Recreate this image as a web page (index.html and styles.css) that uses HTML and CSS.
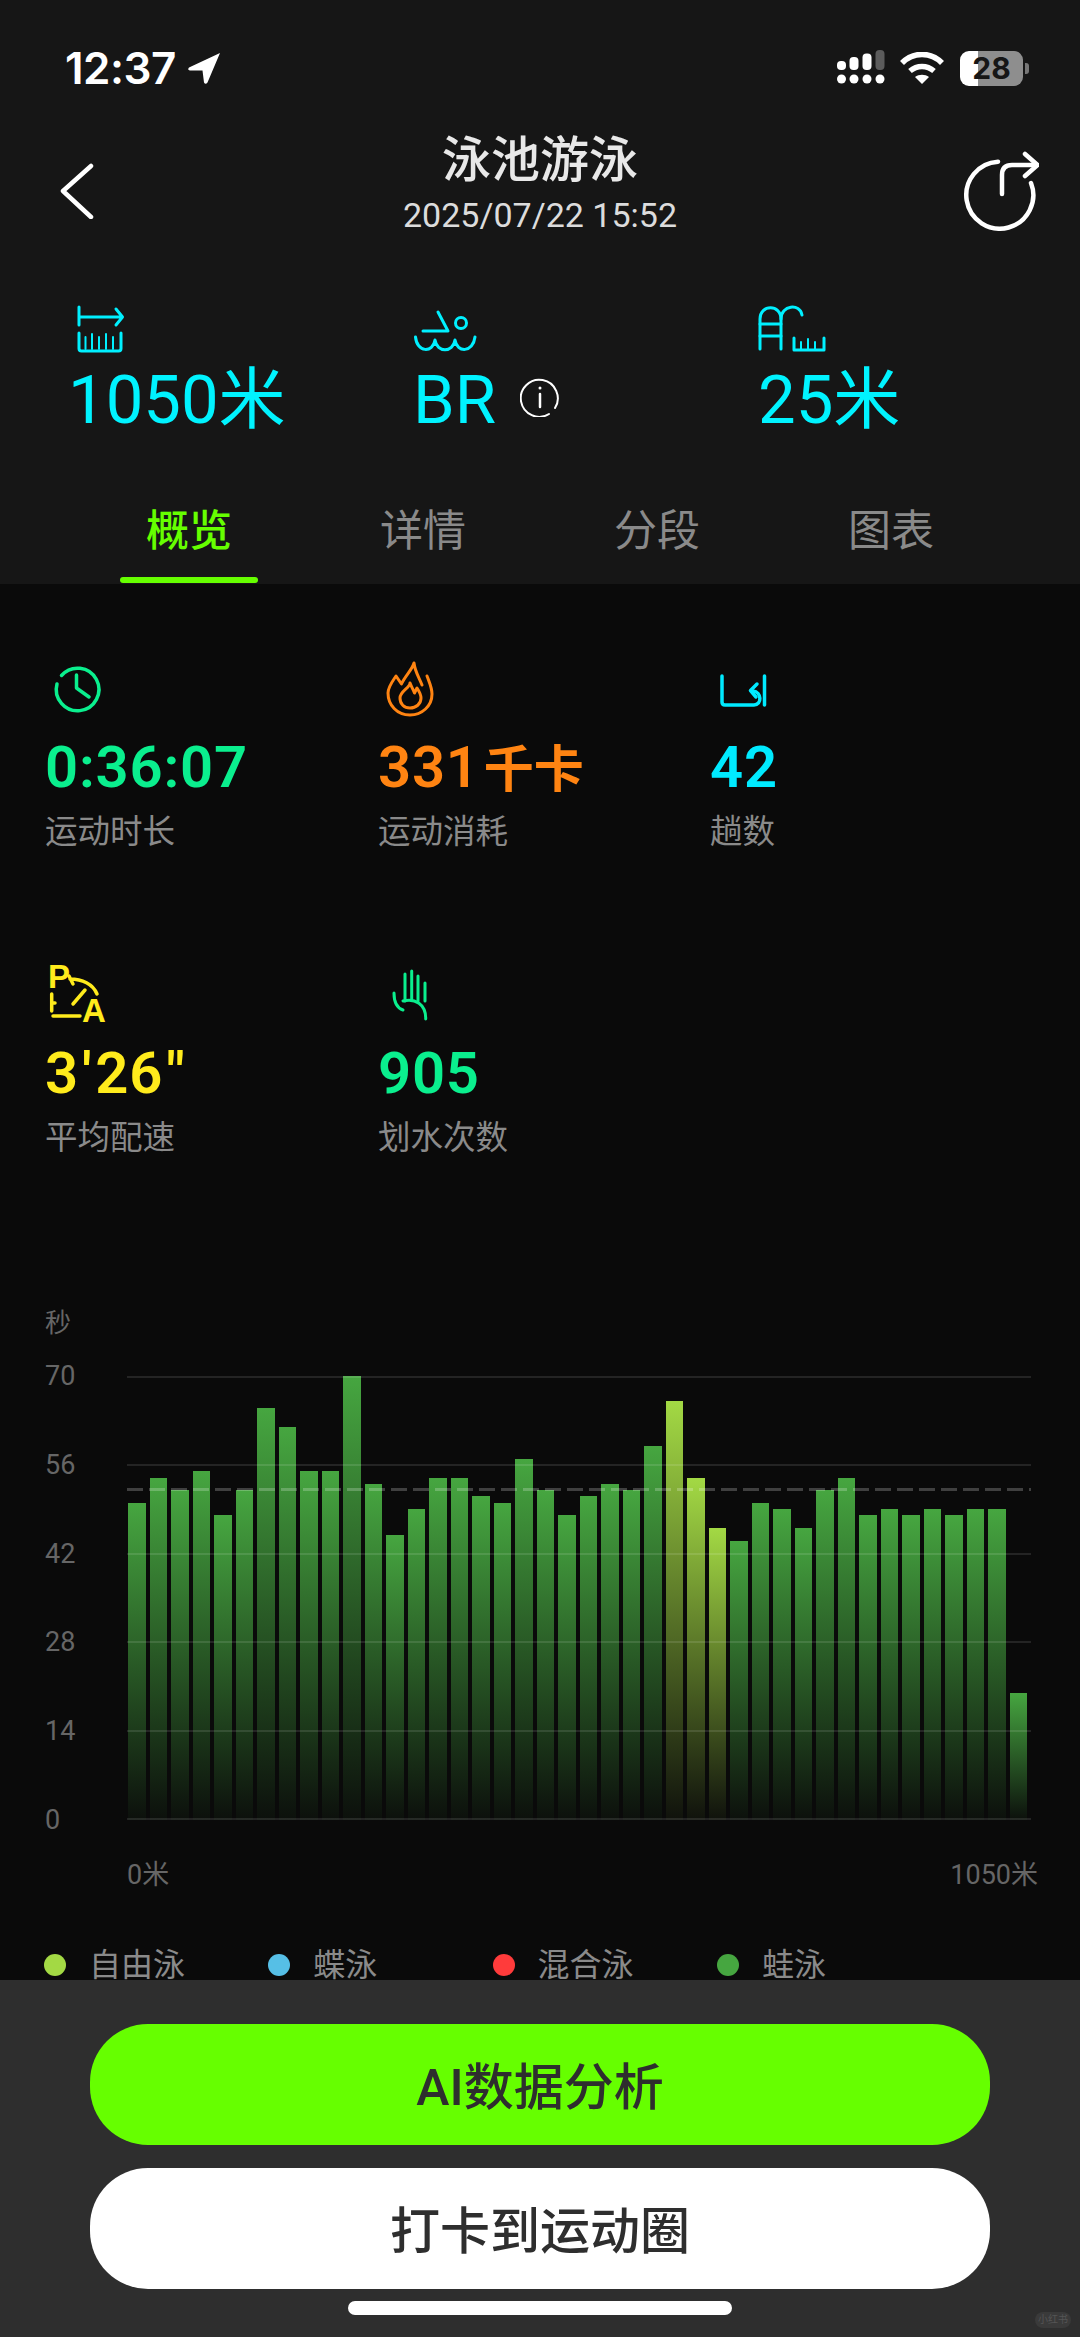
FILE: index.html
```html
<!DOCTYPE html>
<html lang="zh-CN">

<head>
<title>泳池游泳</title>
<meta charset="utf-8" />
<meta name="viewport" content="width=device-width, initial-scale=1.0">

<link rel="stylesheet" href="styles.css">
</head>

<body>

<header class="top">
  <div class="status">
    <span class="time">12:37</span>
    <svg class="location" viewBox="0 0 34 32"><path d="M33 1 2 15.500Q0 18 3 18.500L15.500 18.500 17 30.500Q18.500 33 20.500 30.500Z" fill="#fff"/></svg>
    <span class="status-right">
      <svg class="signal" viewBox="0 0 48 36" fill="#fff">
        <rect x="0" y="11" width="9" height="9" rx="4"/>
        <rect x="12.500" y="7" width="9" height="13" rx="4"/>
        <rect x="25.500" y="3.500" width="9" height="16.500" rx="4"/>
        <rect x="38.500" y="0" width="9" height="20" rx="4" fill="#5c5c5c"/>
        <circle cx="4.500" cy="29" r="4.500"/>
        <circle cx="17" cy="29" r="4.500"/>
        <circle cx="30" cy="29" r="4.500"/>
        <circle cx="43" cy="29" r="4.500"/>
      </svg>
      <svg class="wifi" viewBox="0 0 44 33" fill="none" stroke="#fff">
        <path d="M2 11C13-.5 31-.5 42 11" stroke-width="5.500"/>
        <path d="M10 19C17 13 27 13 34 19" stroke-width="5.500"/>
        <path d="M22 32 15 25C19 22 25 22 29 25Z" fill="#fff" stroke="none"/>
      </svg>
      <span class="battery">28</span>
    </span>
  </div>

  <nav class="nav">
    <svg class="back" viewBox="0 0 36 56" fill="none" stroke="#fff" stroke-width="4.500" stroke-linecap="round" stroke-linejoin="round"><path d="M31 3 3 28 31 54" /></svg>
    <div class="nav-title">
      <h1>泳池游泳</h1>
      <p>2025/07/22 15:52</p>
    </div>
    <svg class="share" viewBox="0 0 80 80" fill="none" stroke="#fff" stroke-width="4.500" stroke-linecap="round" stroke-linejoin="round">
      <path d="M39 10.700A33.500 33.500 0 1 0 72 32"/>
      <path d="M43 43V24Q43 14 53 14H78"/>
      <path d="M66 3 78.500 14 66 25"/>
    </svg>
  </nav>

  <section class="metrics">
    <div class="metric">
      <svg class="metric-icon" viewBox="0 0 60 52" fill="none" stroke="#00f0ff" stroke-width="3" stroke-linecap="round" stroke-linejoin="round">
        <path d="M7 4V22M7 14H50M44 6 50.500 14 44 22"/>
        <path d="M7 30V45.500Q7 48 9.500 48H46.500Q49 48 49 45.500V30"/>
        <path d="M13.500 34V46M20 31V46M27 34V46M34 31V46M41 34V46" stroke-width="2"/>
      </svg>
      <div class="metric-value">1050米</div>
    </div>
    <div class="metric">
      <svg class="metric-icon swim-icon" viewBox="0 0 64 52" fill="none" stroke="#00f0ff" stroke-width="3" stroke-linecap="round" stroke-linejoin="round">
        <path d="M24 9 34 28H9"/>
        <circle cx="47" cy="20" r="5.500"/>
        <path d="M1.500 34C3 50 19 50 21 37 23 50 39 50 41 37 43 50 59 50 61 34"/>
      </svg>
      <div class="metric-value">BR
        <svg class="info" viewBox="0 0 40 40" fill="none" stroke="#fff" stroke-width="2" stroke-linecap="round">
          <path d="M29 37A18.500 18.500 0 1 1 35 31"/>
          <path d="M20 17V30" stroke-width="2.500"/>
          <circle cx="20" cy="11" r="1.500" fill="#fff" stroke="none"/>
        </svg>
      </div>
    </div>
    <div class="metric">
      <svg class="metric-icon pool-icon" viewBox="0 0 68 52" fill="none" stroke="#00f0ff" stroke-width="3" stroke-linecap="round" stroke-linejoin="round">
        <path d="M2 46V16C2 1 23 1 23 16V46"/>
        <path d="M23 16C23 2 42 0 44 12"/>
        <path d="M2 21H23M2 33H23"/>
        <path d="M36 35V47H66V35"/>
        <path d="M43 39V47M50 36V47M57 39V47" stroke-width="2"/>
      </svg>
      <div class="metric-value">25米</div>
    </div>
  </section>

  <div class="tabs">
    <div class="tab active">概览</div>
    <div class="tab">详情</div>
    <div class="tab">分段</div>
    <div class="tab">图表</div>
  </div>
</header>

<main class="main">
  <section class="stats">
    <div class="stat stat-green">
      <svg class="stat-icon" viewBox="0 0 60 60" fill="none" stroke="currentColor" stroke-width="3.500" stroke-linecap="round" stroke-linejoin="round">
        <path d="M10 26A21.300 21.300 0 1 0 14.500 17.500"/>
        <path d="M29.500 17V30L42 39"/>
      </svg>
      <div class="stat-value">0:36:07</div>
      <div class="stat-label">运动时长</div>
    </div>
    <div class="stat stat-orange">
      <svg class="stat-icon" viewBox="0 0 60 60" fill="none" stroke="currentColor" stroke-width="3" stroke-linecap="round" stroke-linejoin="round">
        <path d="M47 18C50 26 52 30 52 36 52 48 42 57 30 57 17 57 8 47 8 35 8 29 12 24 16 18L21.500 26C25 18 32 12 34 5 35 14 39 19 42 27"/>
        <path d="M30 25C30 30 20 33 20 40 20 46 24 50 30 50 36 50 41 46 41 40 41 36 39 33 37 30L34.500 35C33 31 31 28 30 25Z"/>
      </svg>
      <div class="stat-value">331<span class="stat-unit">千卡</span></div>
      <div class="stat-label">运动消耗</div>
    </div>
    <div class="stat stat-cyan">
      <svg class="stat-icon" viewBox="0 0 60 60" fill="none" stroke="currentColor" stroke-width="3.500" stroke-linecap="round" stroke-linejoin="round">
        <path d="M10 18V44Q10 47 13 47H42C50 47 50 34 41 33"/>
        <path d="M45 26 38.500 32.500 44 39"/>
        <path d="M52.500 18V47"/>
      </svg>
      <div class="stat-value">42</div>
      <div class="stat-label">趟数</div>
    </div>
    <div class="stat stat-yellow">
      <svg class="stat-icon stat-icon-tall" viewBox="0 -10 60 80" fill="none" stroke="currentColor" stroke-width="3.500" stroke-linecap="round" stroke-linejoin="round">
        <text class="pace-letter" x="1" y="24">P</text>
        <text class="pace-letter" x="35" y="58">A</text>
        <path d="M23 15C35 15 46 20 50 30M22 12 26 20"/>
        <path d="M26 40 38 26"/>
        <path d="M4.700 30V47M4.700 39H8"/>
        <path d="M6 52H33"/>
      </svg>
      <div class="stat-value">3<span class="prime">'</span>26<span class="prime">"</span></div>
      <div class="stat-label">平均配速</div>
    </div>
    <div class="stat stat-green">
      <svg class="stat-icon" viewBox="0 0 60 60" fill="none" stroke="currentColor" stroke-width="3" stroke-linecap="round" stroke-linejoin="round">
        <path d="M25 10V37M31.700 7V35M38 12V37M45 19V37"/>
        <path d="M14 29C14 38 17 44 23 46"/>
        <path d="M23 37C35 34 46 40 45.700 55"/>
      </svg>
      <div class="stat-value">905</div>
      <div class="stat-label">划水次数</div>
    </div>
  </section>

  <section class="chart">
    <div class="chart-unit">秒</div>
    <div class="chart-body">
      <div class="y-axis">
        <span>70</span><span>56</span><span>42</span><span>28</span><span>14</span><span>0</span>
      </div>
      <div class="plot">
        <div class="bars">
          <div class="bar" style="height:71.4%"></div>
          <div class="bar" style="height:77.1%"></div>
          <div class="bar" style="height:74.3%"></div>
          <div class="bar" style="height:78.6%"></div>
          <div class="bar" style="height:68.6%"></div>
          <div class="bar" style="height:74.3%"></div>
          <div class="bar" style="height:92.9%"></div>
          <div class="bar" style="height:88.6%"></div>
          <div class="bar" style="height:78.6%"></div>
          <div class="bar" style="height:78.6%"></div>
          <div class="bar" style="height:100%"></div>
          <div class="bar" style="height:75.7%"></div>
          <div class="bar" style="height:64.3%"></div>
          <div class="bar" style="height:70%"></div>
          <div class="bar" style="height:77.1%"></div>
          <div class="bar" style="height:77.1%"></div>
          <div class="bar" style="height:72.9%"></div>
          <div class="bar" style="height:71.4%"></div>
          <div class="bar" style="height:81.4%"></div>
          <div class="bar" style="height:74.3%"></div>
          <div class="bar" style="height:68.6%"></div>
          <div class="bar" style="height:72.9%"></div>
          <div class="bar" style="height:75.7%"></div>
          <div class="bar" style="height:74.3%"></div>
          <div class="bar" style="height:84.3%"></div>
          <div class="bar bar-free" style="height:94.3%"></div>
          <div class="bar bar-free" style="height:77.1%"></div>
          <div class="bar bar-free" style="height:65.7%"></div>
          <div class="bar" style="height:62.9%"></div>
          <div class="bar" style="height:71.4%"></div>
          <div class="bar" style="height:70%"></div>
          <div class="bar" style="height:65.7%"></div>
          <div class="bar" style="height:74.3%"></div>
          <div class="bar" style="height:77.1%"></div>
          <div class="bar" style="height:68.6%"></div>
          <div class="bar" style="height:70%"></div>
          <div class="bar" style="height:68.6%"></div>
          <div class="bar" style="height:70%"></div>
          <div class="bar" style="height:68.6%"></div>
          <div class="bar" style="height:70%"></div>
          <div class="bar" style="height:70%"></div>
          <div class="bar" style="height:28.6%"></div>
        </div>
        <div class="grid-lines">
          <i></i><i></i><i></i><i></i><i></i><i></i>
        </div>
        <div class="avg-line"></div>
      </div>
    </div>
    <div class="x-axis"><span>0米</span><span>1050米</span></div>
  </section>

  <section class="legend">
    <div class="legend-item"><i class="dot dot-free"></i>自由泳</div>
    <div class="legend-item"><i class="dot dot-fly"></i>蝶泳</div>
    <div class="legend-item"><i class="dot dot-im"></i>混合泳</div>
    <div class="legend-item"><i class="dot dot-breast"></i>蛙泳</div>
  </section>
</main>

<footer class="actions">
  <button class="btn btn-green">AI数据分析</button>
  <button class="btn btn-white">打卡到运动圈</button>
  <div class="home-bar"></div>
  <div class="watermark">小红书</div>
</footer>

</body>

</html>
```

FILE: styles.css
```css
* {
  box-sizing: border-box;
}

body {
  margin: 0;
  width: 1080px;
  height: 2337px;
  overflow: hidden;
  position: relative;
  background-color: #0a0a0a;
  font-family: Roboto, "Noto Sans CJK SC", sans-serif;
  color: #fff;
}

/* top block */
.top {
  height: 584px;
  background-color: #161616;
}

.status {
  height: 132px;
  padding: 4px 51px 0 65px;
  display: flex;
  align-items: center;
}

.time {
  font-family: Inter, sans-serif;
  font-size: 44px;
  font-weight: 600;
  letter-spacing: -0.5px;
}

.location {
  width: 34px;
  height: 32px;
  margin-left: 11px;
}

.status-right {
  margin-left: auto;
  display: flex;
  align-items: center;
}

.signal {
  width: 48px;
  height: 36px;
}

.wifi {
  width: 44px;
  height: 33px;
  margin-left: 15px;
}

.battery {
  width: 63px;
  height: 35px;
  margin-left: 16px;
  margin-right: 6px;
  position: relative;
  border-radius: 9px;
  background: linear-gradient(90deg, #fff 28%, #8e8e8e 28%);
  color: #161616;
  font-family: Inter, sans-serif;
  font-size: 30px;
  font-weight: 700;
  line-height: 35px;
  text-align: center;
}

.battery::after {
  content: "";
  position: absolute;
  right: -6px;
  top: 12px;
  width: 4px;
  height: 11px;
  border-radius: 0 3px 3px 0;
  background-color: #777;
}

.nav {
  padding: 0 44px;
  display: grid;
  grid-template-columns: 1fr auto 1fr;
  align-items: center;
}

.back {
  width: 36px;
  height: 56px;
  margin-top: 15px;
  margin-left: 16px;
}

.nav-title {
  text-align: center;
}

.nav-title h1 {
  margin: 1px 0 0;
  font-size: 49px;
  font-weight: 500;
  line-height: 56px;
  color: #e8e8e8;
}

.nav-title p {
  margin: 6px 0 0;
  font-size: 34px;
  line-height: 40px;
  color: #dcdcdc;
}

.share {
  width: 80px;
  height: 80px;
  margin-top: 15px;
  margin-right: -3px;
  justify-self: end;
}

.metrics {
  margin-top: 68px;
  padding-left: 68px;
  display: grid;
  grid-template-columns: 345px 345px auto;
}

.metric-icon {
  display: block;
  height: 52px;
  width: auto;
  margin-left: 4px;
}

.swim-icon {
  margin-left: 1px;
}

.pool-icon {
  margin-left: 0;
}

.metric-value {
  margin-top: 7px;
  display: flex;
  align-items: center;
  gap: 24px;
  font-size: 67px;
  line-height: 76px;
  color: #00f3ff;
}

.info {
  width: 40px;
  height: 40px;
  margin-bottom: 7px;
}

.tabs {
  margin-top: 63px;
  padding-left: 72px;
  display: grid;
  grid-template-columns: repeat(4, 234px);
}

.tab {
  display: flex;
  flex-direction: column;
  align-items: center;
  font-size: 43px;
  line-height: 60px;
  color: #8a8a8a;
}

.tab::after {
  content: "";
  width: 138px;
  height: 6px;
  margin-top: 16px;
  border-radius: 3px;
}

.tab.active {
  color: #66ff00;
  font-weight: 500;
}

.tab.active::after {
  background-color: #66ff00;
}

/* overview */
.main {
  height: 1396px;
  padding-top: 74px;
  background-color: #0a0a0a;
}

.stats {
  padding-left: 45px;
  display: grid;
  grid-template-columns: 333px 332px auto;
  row-gap: 112px;
}

.stat-green {
  color: #0aef8e;
}

.stat-orange {
  color: #ff8412;
}

.stat-cyan {
  color: #00eaff;
}

.stat-yellow {
  color: #ffeb1c;
}

.stat-icon {
  display: block;
  width: 60px;
  height: 60px;
  margin-left: 2px;
}

.stat-icon-tall {
  height: 80px;
  margin-top: -10px;
  margin-bottom: -10px;
}

.pace-letter {
  font-family: "Liberation Sans", sans-serif;
  font-size: 33px;
  font-weight: 700;
  fill: currentColor;
  stroke: none;
}

.stat-value {
  height: 60px;
  margin-top: 19px;
  font-family: Roboto, "Noto Sans CJK SC", sans-serif;
  font-size: 58px;
  font-weight: 600;
  line-height: 60px;
  letter-spacing: 0.8px;
}

.stat-unit {
  margin-left: 4px;
  font-family: "Noto Sans CJK SC", sans-serif;
  font-weight: 600;
  font-size: 50px;
  line-height: 1;
  letter-spacing: 0;
}

.prime {
  margin: 0 3px;
}

.stat-label {
  margin-top: 15px;
  font-size: 32.5px;
  line-height: 40px;
  color: #8a8a8a;
}

.chart {
  margin-top: 150px;
  padding-left: 45px;
  color: #666;
  font-size: 27px;
}

.chart-unit {
  font-size: 26px;
  line-height: 30px;
}

.chart-body {
  margin-top: 38px;
  display: grid;
  grid-template-columns: 82px 904px;
}

.y-axis {
  margin: -14px 0;
  display: flex;
  flex-direction: column;
  justify-content: space-between;
  line-height: 28px;
}

.plot {
  height: 444px;
  position: relative;
}

.bars {
  height: 100%;
  padding-left: 1px;
  display: flex;
  align-items: flex-end;
  gap: 4px;
}

.bar {
  width: 17.5px;
  flex: none;
  background: linear-gradient(#46a640, rgba(70, 166, 64, 0.04));
}

.bar-free {
  background: linear-gradient(#a3d944, rgba(163, 217, 68, 0.04));
}

.grid-lines {
  position: absolute;
  inset: 0;
  display: flex;
  flex-direction: column;
  justify-content: space-between;
}

.grid-lines i {
  display: block;
  height: 2px;
  background-color: rgba(255, 255, 255, 0.11);
}

.avg-line {
  position: absolute;
  left: 0;
  right: 0;
  top: 112px;
  height: 3px;
  background: repeating-linear-gradient(90deg, rgba(255, 255, 255, 0.22) 0 16px, transparent 16px 22px);
}

.x-axis {
  width: 993px;
  margin-top: 40px;
  padding-left: 82px;
  display: flex;
  justify-content: space-between;
  line-height: 30px;
  font-size: 27px;
}

.legend {
  margin-top: 59px;
  padding-left: 44px;
  display: grid;
  grid-template-columns: repeat(4, 224.3px);
}

.legend-item {
  display: flex;
  align-items: center;
  gap: 23px;
  font-size: 32px;
  line-height: 32px;
  color: #8a8a8a;
}

.dot {
  width: 22px;
  height: 22px;
  border-radius: 50%;
}

.dot-free {
  background-color: #a3d944;
}

.dot-fly {
  background-color: #56bfe6;
}

.dot-im {
  background-color: #ff3b3b;
}

.dot-breast {
  background-color: #46a640;
}

/* bottom buttons */
.actions {
  height: 357px;
  padding: 44px 90px 0;
  position: relative;
  background-color: #2e2e2e;
  display: flex;
  flex-direction: column;
  align-items: center;
}

.btn {
  width: 900px;
  height: 121px;
  flex: none;
  padding: 0 0 4px;
  border: 0;
  border-radius: 58px;
  font-family: Roboto, "Noto Sans CJK SC", sans-serif;
  font-size: 50px;
  font-weight: 500;
  color: #2e2e2e;
}

.btn-green {
  background-color: #66ff00;
}

.btn-white {
  margin-top: 23px;
  background-color: #fff;
}

.home-bar {
  width: 384px;
  height: 14px;
  margin-top: 12px;
  border-radius: 7px;
  background-color: #fff;
}

.watermark {
  position: absolute;
  right: 9px;
  bottom: 9px;
  width: 36px;
  height: 16px;
  border-radius: 8px;
  background-color: #3a3a3a;
  color: #555;
  font-size: 10px;
  line-height: 16px;
  text-align: center;
}
```
